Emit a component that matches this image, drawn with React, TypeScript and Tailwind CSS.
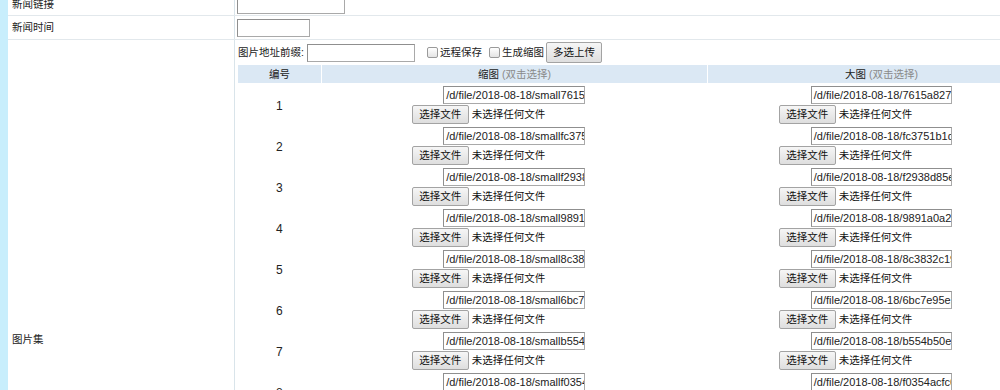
const cjk = "font-['Liberation_Sans','Noto_Sans_CJK_SC',sans-serif]";

const rows = [
  { no: 1, small: '/d/file/2018-08-18/small7615a8273c1e.jpg', big: '/d/file/2018-08-18/7615a8273c1e.jpg' },
  { no: 2, small: '/d/file/2018-08-18/smallfc3751b1d0a2.jpg', big: '/d/file/2018-08-18/fc3751b1d0a2.jpg' },
  { no: 3, small: '/d/file/2018-08-18/smallf2938d85e71b.jpg', big: '/d/file/2018-08-18/f2938d85e71b.jpg' },
  { no: 4, small: '/d/file/2018-08-18/small9891a0a24f6c.jpg', big: '/d/file/2018-08-18/9891a0a24f6c.jpg' },
  { no: 5, small: '/d/file/2018-08-18/small8c3832c19b07.jpg', big: '/d/file/2018-08-18/8c3832c19b07.jpg' },
  { no: 6, small: '/d/file/2018-08-18/small6bc7e95e2a44.jpg', big: '/d/file/2018-08-18/6bc7e95e2a44.jpg' },
  { no: 7, small: '/d/file/2018-08-18/smallb554b50e8d13.jpg', big: '/d/file/2018-08-18/b554b50e8d13.jpg' },
  { no: 8, small: '/d/file/2018-08-18/smallf0354acfc6e9.jpg', big: '/d/file/2018-08-18/f0354acfc6e9.jpg' },
  { no: 9, small: '/d/file/2018-08-18/small2a81c4d05f3e.jpg', big: '/d/file/2018-08-18/2a81c4d05f3e.jpg' },
  { no: 10, small: '/d/file/2018-08-18/small5d09e1b7c28a.jpg', big: '/d/file/2018-08-18/5d09e1b7c28a.jpg' },
];

function TextBox({ value = '', className = '' }: { value?: string; className?: string }) {
  return (
    <div
      className={`h-[18px] border border-[#a9a9a9] border-t-[#8f8f8f] border-l-[#8f8f8f] bg-white overflow-hidden whitespace-nowrap pl-[2px] text-[11px] leading-[16px] text-[#222] ${className}`}
    >
      {value}
    </div>
  );
}

function Btn({ children, className = '' }: { children: React.ReactNode; className?: string }) {
  return (
    <span
      className={`inline-flex items-center justify-center rounded-[2px] border border-[#a3a3a3] bg-gradient-to-b from-[#f6f6f6] to-[#dedede] text-[10.5px] text-[#111] ${className}`}
    >
      {children}
    </span>
  );
}

function Check() {
  return <span className="inline-block w-[11px] h-[11px] rounded-[2px] border border-[#9a9a9a] bg-gradient-to-b from-white to-[#e4e4e4]" />;
}

function FileField() {
  return (
    <div className="flex items-center h-[19px] w-[205px]">
      <Btn className="w-[57px] h-[19px]">选择文件</Btn>
      <span className="ml-[3px] text-[10.5px] text-[#111] whitespace-nowrap">未选择任何文件</span>
    </div>
  );
}

export default function App() {
  return (
    <div className={`flex h-[390px] w-full overflow-hidden bg-white text-[#222] ${cjk}`}>
      <div className="w-[8px] shrink-0 bg-[#c8eefc]" />
      <div className="flex-1 min-w-0">
        <div className="-mt-[6px] flex h-[22px] border-b border-[#e2e8ec]">
          <div className="w-[226px] shrink-0 flex items-center pl-[4px] text-[10.5px]">新闻链接</div>
          <div className="flex-1 flex items-center pl-[2px] border-l border-[#d9e4ea]">
            <TextBox className="w-[108px]" />
          </div>
        </div>
        <div className="flex h-[24px] border-b border-[#e2e8ec]">
          <div className="w-[226px] shrink-0 flex items-center pl-[4px] text-[10.5px]">新闻时间</div>
          <div className="flex-1 flex items-center pl-[2px] border-l border-[#d9e4ea]">
            <TextBox className="w-[73px]" />
          </div>
        </div>
        <div className="flex h-[600px]">
          <div className="w-[226px] shrink-0 flex items-center pl-[4px] text-[10.5px]">图片集</div>
          <div className="flex-1 min-w-0 pl-[3px] border-l border-[#d9e4ea]">
            <div className="flex items-center h-[25px] text-[10.5px]">
              <span>图片地址前缀:</span>
              <TextBox className="ml-[3px] w-[108px]" />
              <span className="ml-[12px] flex items-center"><Check /></span>
              <span className="ml-[2px]">远程保存</span>
              <span className="ml-[7px] flex items-center"><Check /></span>
              <span className="ml-[2px]">生成缩图</span>
              <Btn className="ml-[2px] w-[56px] h-[21px]">多选上传</Btn>
            </div>
            <div className="w-[817px]">
              <div className="flex h-[18px] bg-[#dbe8f4] text-[10.5px] leading-[18px]">
                <div className="w-[83px] text-center">编号</div>
                <div className="w-[386px] text-center border-l border-white">
                  缩图 <span className="text-[#8a8a8a]">(双击选择)</span>
                </div>
                <div className="w-[348px] text-center border-l border-white">
                  大图 <span className="text-[#8a8a8a]">(双击选择)</span>
                </div>
              </div>
              {rows.map((r) => (
                <div key={r.no} className="flex h-[41px]">
                  <div className="w-[83px] flex items-center justify-center pt-[5px] text-[12px]">{r.no}</div>
                  <div className="w-[387px] flex flex-col items-center pt-[3px] gap-[1px]">
                    <TextBox value={r.small} className="w-[142px]" />
                    <FileField />
                  </div>
                  <div className="w-[348px] flex flex-col items-center pt-[3px] gap-[1px]">
                    <TextBox value={r.big} className="w-[141px]" />
                    <FileField />
                  </div>
                </div>
              ))}
            </div>
          </div>
        </div>
      </div>
    </div>
  );
}
